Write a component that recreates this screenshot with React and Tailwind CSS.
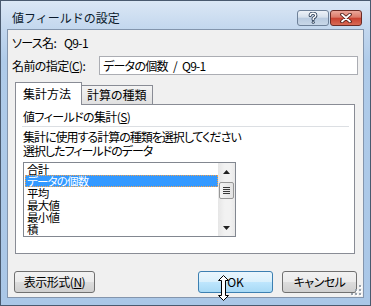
export default function App() {
  const items = ["合計", "データの個数", "平均", "最大値", "最小値", "積"];
  return (
    <div className="relative w-[371px] h-[306px] flex flex-col border border-[#4a5a6f] px-[6px] pb-[7px] bg-[linear-gradient(to_bottom,#dbe7f5_0px,#c3d7ee_28px,#afcbe9_60px,#aac7e7_100%)] font-['Noto_Sans_CJK_JP',sans-serif] text-black">
      {/* Title bar */}
      <div className="h-[28px] flex items-start justify-between">
        <div className="pl-[5px] pt-[9px] text-[12px] leading-[16px] text-[#0b1a2c]">値フィールドの設定</div>
        <div className="flex mt-[9px] mr-[2px] gap-px">
          <div className="w-[32px] h-[16px] rounded-[3px] border border-[#6e8199] bg-[linear-gradient(to_bottom,#edf2f8_0%,#d5e0ec_45%,#b8cadf_50%,#c8d7e8_100%)] flex items-center justify-center">
            <svg width="10" height="12" viewBox="0 0 10 12">
              <path d="M2.2 3.6 Q2.2 1.3 5 1.3 Q7.8 1.3 7.8 3.5 Q7.8 5 5.2 6.2 L5.2 7.6" fill="none" stroke="#33465e" strokeWidth="3.2" strokeLinecap="round" strokeLinejoin="round" />
              <path d="M2.2 3.6 Q2.2 1.3 5 1.3 Q7.8 1.3 7.8 3.5 Q7.8 5 5.2 6.2 L5.2 7.6" fill="none" stroke="#ffffff" strokeWidth="1.4" strokeLinecap="round" strokeLinejoin="round" />
              <circle cx="5.2" cy="10.3" r="1.5" fill="#33465e" />
              <circle cx="5.2" cy="10.3" r="0.7" fill="#ffffff" />
            </svg>
          </div>
          <div className="w-[32px] h-[16px] rounded-[3px] border border-[#6a2b25] bg-[linear-gradient(to_bottom,#eba79a_0%,#db7a69_45%,#c8402f_50%,#d86a55_100%)] flex items-center justify-center">
            <svg width="14" height="10" viewBox="0 0 14 10">
              <path d="M3 1.5 L11 8.5 M11 1.5 L3 8.5" stroke="#4a1a14" strokeWidth="3.6" strokeLinecap="round" />
              <path d="M3 1.5 L11 8.5 M11 1.5 L3 8.5" stroke="#ffffff" strokeWidth="1.8" strokeLinecap="round" />
            </svg>
          </div>
        </div>
      </div>

      {/* Client area */}
      <div className="relative flex-1 border border-[#8395ad] bg-[#f0f0f0] flex flex-col text-[12px] [font-feature-settings:'palt']">
        <div className="mt-[4px] h-[18px] pl-[4px] leading-[18px] flex tracking-[-0.6px]">
          <span className="w-[52px]">ソース名:</span>
          <span>Q9-1</span>
        </div>
        <div className="mt-[4px] h-[19px] flex items-center">
          <span className="w-[91px] pl-[4px] leading-[19px] tracking-[-0.6px]">
            名前の指定(<span className="underline">C</span>):
          </span>
          <div className="flex-1 mr-[5px] h-[19px] border border-[#abadb3] bg-white pl-[3px] leading-[17px] tracking-[-0.7px] flex">
            <span>データの個数</span>
            <span className="mx-[5px]">/</span>
            <span>Q9-1</span>
          </div>
        </div>

        {/* Tabs */}
        <div className="mt-[7px] ml-[7px] mr-[8px] flex flex-col">
          <div className="relative z-10 -mb-px flex items-end h-[23px]">
            <div className="h-[23px] w-[67px] border-t border-l border-r border-[#898c95] bg-white pl-[7px] pt-[2px] leading-[18px] text-[12px]">
              集計方法
            </div>
            <div className="h-[20px] w-[71px] border-t border-r border-b border-[#898c95] bg-[linear-gradient(to_bottom,#f4f4f4,#e0e0e0)] pl-[5px] leading-[18px] text-[12px]">
              計算の種類
            </div>
          </div>
          <div className="h-[150px] border border-[#898c95] bg-white flex flex-col pl-[7px]">
            <div className="mt-[5px] h-[14px] leading-[14px] tracking-[-0.6px]">
              値フィールドの集計(<span className="underline">S</span>)
            </div>
            <div className="mt-[2px] h-px -ml-px mr-[5px] bg-[#dcdfe3]" />
            <div className="mt-[3px] h-[14px] leading-[14px] tracking-[-1px]">集計に使用する計算の種類を選択してください</div>
            <div className="h-[14px] leading-[14px] tracking-[-1px]">選択したフィールドのデータ</div>

            {/* Listbox */}
            <div className="mt-[4px] w-[213px] h-[75px] border border-[#828790] bg-white flex">
              <div className="flex-1 flex flex-col pl-px">
                {items.map((it, i) => (
                  <div
                    key={it}
                    className={
                      i === 1
                        ? "h-[12px] leading-[12px] text-[11.5px] tracking-[-0.8px] pl-[2px] bg-[#3399ff] text-white outline-1 outline-dotted outline-[#f6a24a] -outline-offset-1"
                        : "h-[12px] leading-[12px] text-[11.5px] tracking-[-0.8px] pl-[2px]"
                    }
                  >
                    {it}
                  </div>
                ))}
              </div>
              <div className="w-[17px] flex flex-col bg-[linear-gradient(to_right,#e6e6e6,#f2f2f2_40%,#f2f2f2_70%,#e9e9e9)]">
                <div className="h-[17px] flex items-center justify-center">
                  <svg width="7" height="4" viewBox="0 0 7 4">
                    <path d="M3.5 0 L7 4 L0 4 Z" fill="#222" />
                  </svg>
                </div>
                <div className="mt-[2px] mx-px h-[17px] rounded-[2px] border border-[#979797] bg-[linear-gradient(to_right,#f4f4f4,#e3e3e3)] flex flex-col items-center justify-center gap-px">
                  <div className="w-[7px] h-px bg-[#3a3a3a]" />
                  <div className="w-[7px] h-px bg-[#3a3a3a]" />
                  <div className="w-[7px] h-px bg-[#3a3a3a]" />
                  <div className="w-[7px] h-px bg-[#3a3a3a]" />
                </div>
                <div className="flex-1" />
                <div className="h-[17px] flex items-center justify-center">
                  <svg width="7" height="4" viewBox="0 0 7 4">
                    <path d="M0 0 L7 0 L3.5 4 Z" fill="#222" />
                  </svg>
                </div>
              </div>
            </div>
          </div>
        </div>

        {/* Buttons */}
        <div className="mt-[17px] px-[6px] flex">
          <div className="w-[81px] h-[22px] rounded-[3px] border border-[#707070] bg-[linear-gradient(to_bottom,#f2f2f2_0%,#ebebeb_50%,#dddddd_51%,#cfcfcf_100%)] flex items-center justify-center leading-[14px] tracking-[-0.5px]">
            表示形式(<span className="underline">N</span>)
          </div>
          <div className="ml-auto w-[75px] h-[22px] rounded-[3px] border border-[#3c7fb1] bg-[linear-gradient(to_bottom,#eaf6fd_0%,#d9f0fc_50%,#bee6fd_51%,#a7d9f5_100%)] flex items-center justify-center leading-[14px]">
            OK
          </div>
          <div className="ml-[9px] w-[75px] h-[22px] rounded-[3px] border border-[#707070] bg-[linear-gradient(to_bottom,#f2f2f2_0%,#ebebeb_50%,#dddddd_51%,#cfcfcf_100%)] flex items-center justify-center leading-[14px] tracking-[-0.5px]">
            キャンセル
          </div>
        </div>

        {/* Resize grip */}
        <svg className="absolute right-px bottom-px" width="11" height="11" viewBox="0 0 11 11">
          {[[9, 1], [9, 5], [5, 5], [9, 9], [5, 9], [1, 9]].map(([x, y], i) => (
            <g key={i}>
              <rect x={x} y={y} width="2" height="2" fill="#ffffff" />
              <rect x={x - 1} y={y - 1} width="2" height="2" fill="#9aa3ad" />
            </g>
          ))}
        </svg>
      </div>

      {/* Mouse cursor */}
      <svg className="absolute left-[216px] top-[274px]" width="13" height="27" viewBox="0 0 13 27">
        <path
          d="M6.5 0.5 L11.5 5.5 L8.5 5.5 L8.5 20.5 L11.5 20.5 L6.5 25.5 L1.5 20.5 L4.5 20.5 L4.5 5.5 L1.5 5.5 Z"
          fill="#ffffff"
          stroke="#000000"
          strokeWidth="1"
        />
      </svg>
    </div>
  );
}
